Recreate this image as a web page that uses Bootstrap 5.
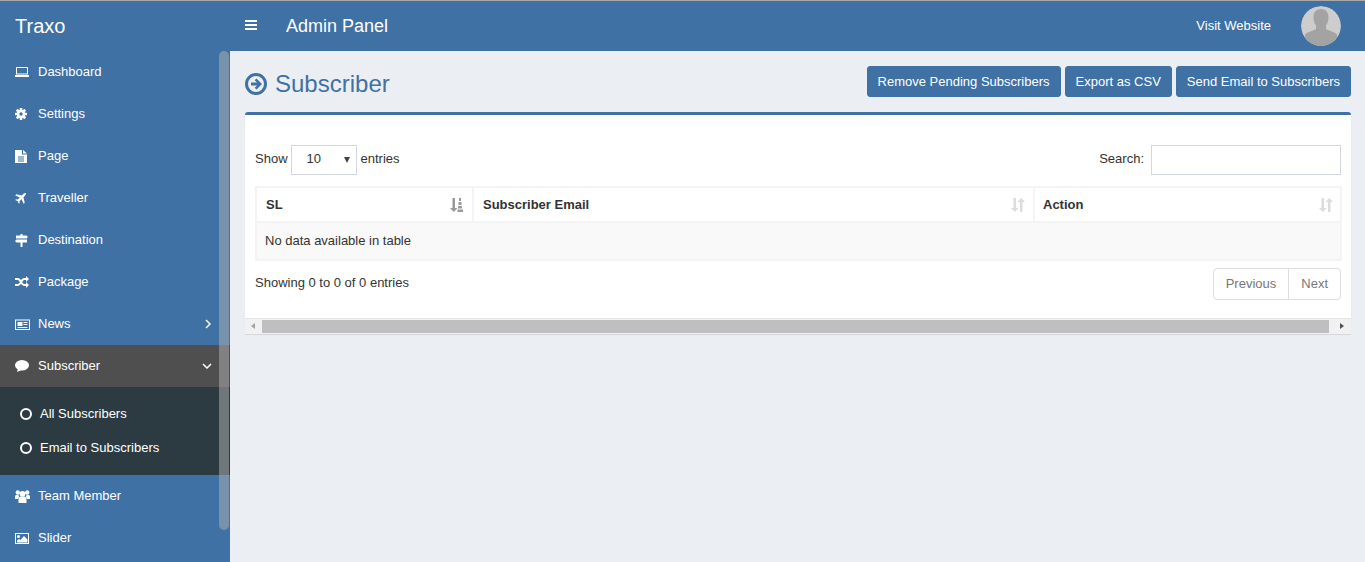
<!DOCTYPE html>
<html lang="en">
<head>
<meta charset="utf-8">
<title>Subscriber</title>
<link href="https://cdn.jsdelivr.net/npm/bootstrap@5.3.0/dist/css/bootstrap.min.css" rel="stylesheet">
<style>
html,body{height:562px;overflow:hidden}
body{font-family:"Liberation Sans",Arial,sans-serif;font-size:13px;color:#333;background:#ebeef3}
.app-top{height:51px;background:#3f71a5;border-top:1px solid #a9a9a9;color:#fff}
.app-brand{width:230px;padding-left:15px;font-size:20px;line-height:49px}
.app-burger{width:56px;padding-left:15px;padding-bottom:3px}
.app-title{font-size:18px}
.app-visit{color:#fff;text-decoration:none;font-size:13px;margin-right:30px}
.app-avatar{width:40px;height:40px;border-radius:50%;margin-right:24px;display:block}
.app-body{height:511px}
.app-side{width:230px;background:#3f71a5;position:relative;overflow:hidden;flex:none}
.side-link{height:42px;padding-left:15px;color:#fff;text-decoration:none}
.side-link svg{flex:none}
.side-ico{width:23px;display:flex;align-items:center}
.side-chev{margin-left:auto;margin-right:19px}
.side-chev-down{margin-right:18px}
.side-link.is-open{background:#4f4f4f}
.side-sub{background:#2c3b41;height:88px;padding-top:10px}
.side-sublink{height:34px;padding-left:20px;color:#fff;text-decoration:none}
.side-ring{width:12px;height:12px;border:2px solid #fff;border-radius:50%;margin-right:8px}
.side-thumb{position:absolute;left:219px;top:0;width:10px;height:479px;border-radius:5px;background:rgba(180,180,180,.5)}
.app-main{padding:15px 14px 0 15px;min-width:0}
.page-head{height:46px}
.page-name{font-size:24px;color:#3f71a5;font-weight:400;line-height:36px}
.act-btn{background:#3f71a5;border:1px solid #3f71a5;color:#fff;font-size:13px;height:31px;padding:0 10px;border-radius:3px;line-height:29px}
.act-btn:hover{background:#3f71a5;color:#fff}
.data-panel{background:#fff;border:0;border-top:3px solid #3f71a5;border-radius:3px 3px 0 0;box-shadow:0 1px 1px rgba(0,0,0,.1);height:222px;position:relative}
.panel-inner{padding:30px 10px 0}
.ctl-label{padding-bottom:2px}
.len-box{width:66px;height:30px;border:1px solid #d2d6de;margin:0 4px 0 3px;padding-left:15px;padding-right:6px;color:#333}
.len-arrow{width:0;height:0;border-left:3.5px solid transparent;border-right:3.5px solid transparent;border-top:6px solid #444}
.find-box{width:190px;height:30px;border:1px solid #d2d6de;margin-left:7px;background:#fff}
.dtable{width:1085px;border-collapse:collapse;table-layout:fixed;margin:11px 0 0}
.dtable th,.dtable td{border:2px solid #f4f4f4}
.dtable th{height:35px;font-weight:700;color:#333;background:#fff;padding:0 8px 0 9px}
.dtable th:last-child{padding:0 7px 0 8px}
.dtable td{height:38px;background:#f9f9f9;padding:0 8px}
.th-in{display:flex;align-items:center;justify-content:space-between}
.foot-row{margin-top:7px}
.pg-wrap{border:1px solid #ddd;border-radius:4px;height:32px;color:#777}
.pg-cell{padding:0 12px;line-height:30px}
.pg-cell+.pg-cell{border-left:1px solid #ddd}
.foot-info{padding-bottom:3px}
.hscroll{position:absolute;left:0;right:0;bottom:0;height:16px;background:#f1f1f1;border-top:1px solid #e4e4e4;padding:1px 0}
.hs-thumb{height:13px;background:#bfbfbf;margin:0 22px 0 17px}
.hs-l,.hs-r{position:absolute;top:4px;width:0;height:0;border-top:3.5px solid transparent;border-bottom:3.5px solid transparent}
.hs-l{left:6px;border-right:4px solid #a3a3a3}
.hs-r{right:7px;border-left:4px solid #505050}
</style>
</head>
<body>
<header class="app-top d-flex align-items-center">
  <div class="app-brand">Traxo</div>
  <div class="app-burger d-flex align-items-center"><svg width="12" height="10" viewBox="0 0 12 10" fill="#fff"><rect width="12" height="2"/><rect y="4" width="12" height="2"/><rect y="8" width="12" height="2"/></svg></div>
  <div class="app-title">Admin Panel</div>
  <div class="ms-auto d-flex align-items-center">
    <a class="app-visit" href="#">Visit Website</a>
    <svg class="app-avatar" viewBox="0 0 40 40"><circle cx="20" cy="20" r="20" fill="#cdcdcd"/><clipPath id="av"><circle cx="20" cy="20" r="20"/></clipPath><g clip-path="url(#av)" fill="#a3a3a3"><path d="M20 3c5 0 7.500 3.500 7.500 8.500 0 3-1 6-2.500 8v3.500c3 2 9 3 11 5.500V40H4V28.500c2-2.500 8-3.500 11-5.500v-3.500c-1.500-2-2.500-5-2.500-8C12.500 6.500 15 3 20 3z"/></g></svg>
  </div>
</header>
<div class="app-body d-flex">
  <aside class="app-side">
    <nav class="d-flex flex-column">
      <a class="side-link d-flex align-items-center" href="#"><span class="side-ico"><svg width="14" height="10" viewBox="0 0 14 10" fill="#fff"><path d="M2 0h10a1 1 0 0 1 1 1v6.500H1V1a1 1 0 0 1 1-1zm0 1v5.500h10V1zM0 8h14v.8a1 1 0 0 1-1 1.200H1a1 1 0 0 1-1-1.200z" fill-rule="evenodd"/></svg></span>Dashboard</a>
      <a class="side-link d-flex align-items-center" href="#"><span class="side-ico"><svg width="12" height="12" viewBox="0 0 12 12"><g fill="#fff"><rect x="4.700" y="0" width="2.600" height="12" rx=".4"/><rect x="4.700" y="0" width="2.600" height="12" rx=".4" transform="rotate(45 6 6)"/><rect x="4.700" y="0" width="2.600" height="12" rx=".4" transform="rotate(90 6 6)"/><rect x="4.700" y="0" width="2.600" height="12" rx=".4" transform="rotate(135 6 6)"/></g><circle cx="6" cy="6" r="3.300" fill="none" stroke="#fff" stroke-width="1.800"/><circle cx="6" cy="6" r="1.700" fill="#3f71a5"/></svg></span>Settings</a>
      <a class="side-link d-flex align-items-center" href="#"><span class="side-ico"><svg width="12" height="13" viewBox="0 0 12 13"><path fill="#fff" d="M0 0h7v4.500h5V13H0z"/><path fill="#fff" d="M8 0l4 3.500H8z"/><path stroke="#3f71a5" d="M3 7h6M3 9h6M3 11h6"/></svg></span>Page</a>
      <a class="side-link d-flex align-items-center" href="#"><span class="side-ico"><svg width="11" height="11" viewBox="0 0 11 11" fill="#fff"><path d="M10.800.2c.5.5 0 1.700-.9 2.600L8.500 4.200 9.700 9.700 8.600 10.800 6.500 6.200 4.400 8.300 4.700 10 3.900 10.800 2.800 8.200.2 7.100 1 6.300l1.700.3 2.100-2.100L.2 2.400 1.300 1.300l5.500 1.200L8.200 1.100C9.100.2 10.300-.3 10.800.2z"/></svg></span>Traveller</a>
      <a class="side-link d-flex align-items-center" href="#"><span class="side-ico"><svg width="13" height="13" viewBox="0 0 13 13" fill="#fff"><path d="M5.500 0h2v1.500h4L13 3l-1.500 1.500H1V1.500h4.500zM0 7l1.500-1.500H12v3H7.500V13h-2V8.500h-4z"/></svg></span>Destination</a>
      <a class="side-link d-flex align-items-center" href="#"><span class="side-ico"><svg width="14" height="12" viewBox="0 0 14 12" fill="none" stroke="#fff" stroke-width="2"><path d="M0 3h3c2.500 0 3.500 6 6 6h2.500M0 9h3c2.500 0 3.500-6 6-6h2.500"/><path fill="#fff" stroke="none" d="M11 0l3 3-3 3zM11 6l3 3-3 3z"/></svg></span>Package</a>
      <a class="side-link d-flex align-items-center" href="#"><span class="side-ico"><svg width="15" height="11" viewBox="0 0 15 11"><path fill="#fff" fill-rule="evenodd" d="M0 .5h15V11H0zM1 1.500v8.500h13V1.500z"/><path fill="#fff" d="M2.500 3h5v4h-5zM8.500 3h4v1h-4zM8.500 5h4v1h-4zM2.500 8h10v1h-10z"/></svg></span>News<svg class="side-chev" width="6" height="10" viewBox="0 0 6 10" fill="none" stroke="#fff" stroke-width="1.500"><path d="M1 1l4 4-4 4"/></svg></a>
      <a class="side-link is-open d-flex align-items-center" href="#"><span class="side-ico"><svg width="14" height="12" viewBox="0 0 14 12" fill="#fff"><ellipse cx="7" cy="5.200" rx="7" ry="5.200"/><path d="M3 8.500l-1 3.500 4.500-2z"/></svg></span>Subscriber<svg class="side-chev side-chev-down" width="10" height="6" viewBox="0 0 10 6" fill="none" stroke="#fff" stroke-width="1.500"><path d="M1 1l4 4 4-4"/></svg></a>
      <div class="side-sub">
        <a class="side-sublink d-flex align-items-center" href="#"><span class="side-ring"></span>All Subscribers</a>
        <a class="side-sublink d-flex align-items-center" href="#"><span class="side-ring"></span>Email to Subscribers</a>
      </div>
      <a class="side-link d-flex align-items-center" href="#"><span class="side-ico"><svg width="15" height="13" viewBox="0 0 15 13" fill="#fff"><circle cx="2.800" cy="2.500" r="2.200"/><circle cx="12.200" cy="2.500" r="2.200"/><circle cx="7.500" cy="3.800" r="2.900"/><path d="M0 9V6.500C0 5.500.8 5 1.500 5h2l.5 2-1 2zM15 9V6.500c0-1-.8-1.500-1.500-1.500h-2l-.5 2 1 2z"/><path d="M3.500 13V9c0-1.500 1-2.500 2-2.500h4c1 0 2 1 2 2.500v4z"/></svg></span>Team Member</a>
      <a class="side-link d-flex align-items-center" href="#"><span class="side-ico"><svg width="14" height="11" viewBox="0 0 14 11"><path fill="#fff" fill-rule="evenodd" d="M0 0h14v11H0zM1 1v9h12V1z"/><circle fill="#fff" cx="3.500" cy="3.500" r="1.500"/><path fill="#fff" d="M2 9.500V7.500l2-1.500 1.500 1L9 3l3.500 3.500v3z"/></svg></span>Slider</a>
    </nav>
    <div class="side-thumb"></div>
  </aside>
  <main class="app-main flex-grow-1">
    <div class="page-head d-flex justify-content-between align-items-start">
      <div class="d-flex align-items-center gap-2">
        <svg width="22" height="22" viewBox="0 0 22 22"><circle cx="11" cy="11" r="9.500" fill="none" stroke="#3f71a5" stroke-width="3"/><path fill="#3f71a5" d="M11.500 5.500L17 11l-5.500 5.500-1.800-1.800L12 12.500H6v-3h6L9.700 7.300z"/></svg>
        <h1 class="page-name m-0">Subscriber</h1>
      </div>
      <div class="d-flex gap-1">
        <a class="btn act-btn" href="#">Remove Pending Subscribers</a>
        <a class="btn act-btn" href="#">Export as CSV</a>
        <a class="btn act-btn" href="#">Send Email to Subscribers</a>
      </div>
    </div>
    <section class="data-panel">
      <div class="panel-inner">
        <div class="d-flex justify-content-between align-items-center">
          <div class="d-flex align-items-center"><span class="ctl-label">Show</span><span class="len-box d-flex align-items-center justify-content-between"><span class="ctl-label">10</span><span class="len-arrow"></span></span><span class="ctl-label">entries</span></div>
          <div class="d-flex align-items-center"><span class="ctl-label">Search:</span><span class="find-box"></span></div>
        </div>
        <table class="dtable">
          <colgroup><col style="width:217px"><col style="width:561px"><col style="width:307px"></colgroup>
          <thead><tr>
            <th><div class="th-in">SL<svg width="14" height="14" viewBox="0 0 14 14" fill="#9a9a9a"><path d="M2.500 0h2.500v10H7.500L3.800 14 0 10h2.500z"/><path d="M9 0h2v3H9zM8.500 4h3v3h-3zM8 8h4v2.500H8zM7.500 11.500H13V14H7.500z"/></svg></div></th>
            <th><div class="th-in">Subscriber Email<svg width="14" height="14" viewBox="0 0 14 14" fill="#dcdcdc"><path d="M2.500 0h2.500v10H7.500L3.800 14 0 10h2.500zM9 14V4H6.500L10.200 0 14 4h-2.500v10z"/></svg></div></th>
            <th><div class="th-in">Action<svg width="14" height="14" viewBox="0 0 14 14" fill="#dcdcdc"><path d="M2.500 0h2.500v10H7.500L3.800 14 0 10h2.500zM9 14V4H6.500L10.200 0 14 4h-2.500v10z"/></svg></div></th>
          </tr></thead>
          <tbody><tr><td colspan="3">No data available in table</td></tr></tbody>
        </table>
        <div class="foot-row d-flex justify-content-between align-items-center">
          <div class="foot-info">Showing 0 to 0 of 0 entries</div>
          <div class="pg-wrap d-flex"><span class="pg-cell">Previous</span><span class="pg-cell">Next</span></div>
        </div>
      </div>
      <div class="hscroll"><div class="hs-thumb"></div><span class="hs-l"></span><span class="hs-r"></span></div>
    </section>
  </main>
</div>
</body>
</html>
